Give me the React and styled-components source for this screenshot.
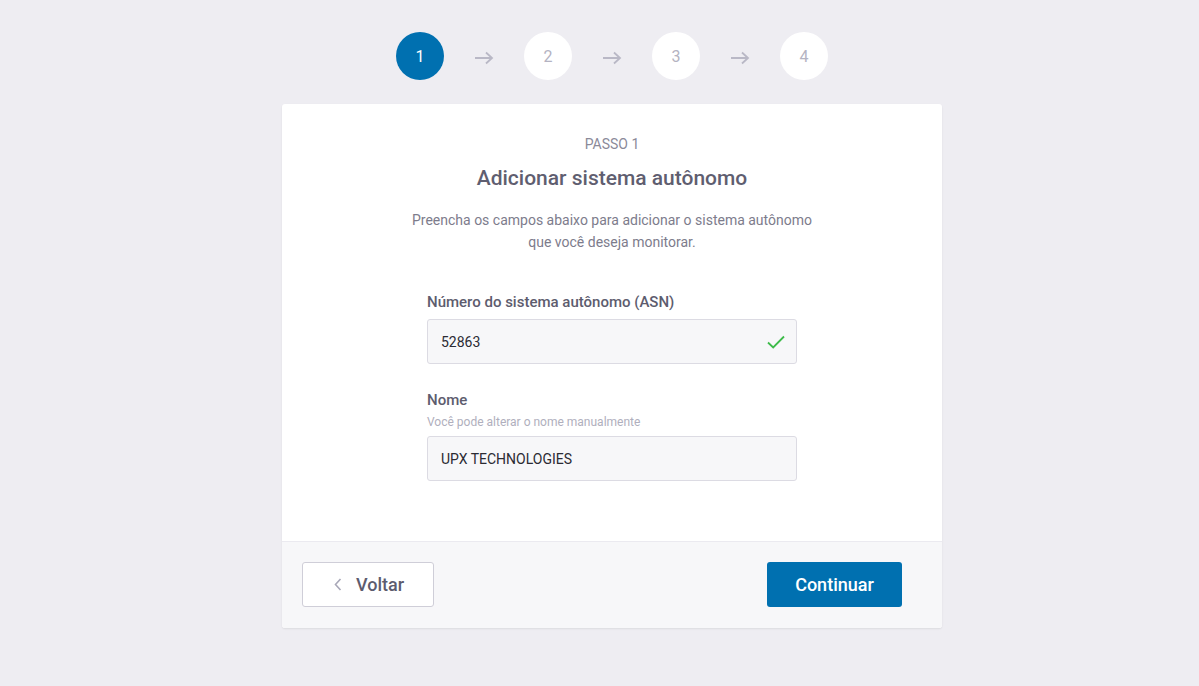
import React, { useState } from 'react';
import styled, { createGlobalStyle } from 'styled-components';

const GlobalStyle = createGlobalStyle`
  html, body {
    margin: 0;
    padding: 0;
    background: #eeedf2;
    font-family: Roboto, 'Liberation Sans', sans-serif;
  }
  * { box-sizing: border-box; }
`;

const Page = styled.div`
  min-height: 686px;
  display: flex;
  flex-direction: column;
  align-items: center;
  padding: 32px 0 0 25px;
`;

const Stepper = styled.div`
  display: flex;
  align-items: center;
  margin-bottom: 24px;
`;

const StepCircle = styled.div`
  width: 48px;
  height: 48px;
  border-radius: 50%;
  display: flex;
  align-items: center;
  justify-content: center;
  font-size: 16px;
  background: ${p => (p.active ? '#0070b0' : '#ffffff')};
  color: ${p => (p.active ? '#ffffff' : '#b4b3c2')};
`;

const StepArrow = styled.div`
  width: 80px;
  display: flex;
  justify-content: center;
  padding-top: 4px;
`;

const Card = styled.div`
  width: 660px;
  background: #ffffff;
  border-radius: 3px;
  box-shadow: 0 1px 2px rgba(0, 0, 0, 0.08);
  overflow: hidden;
`;

const CardBody = styled.div`
  display: flex;
  flex-direction: column;
  align-items: center;
  padding: 32px 0 60px;
  border-bottom: 1px solid #ebeaf0;
`;

const StepLabel = styled.div`
  font-size: 14px;
  color: #8b8a99;
  line-height: 16px;
`;

const Title = styled.h1`
  margin: 14px 0 0;
  font-size: 21px;
  font-weight: 500;
  color: #5f5e70;
  line-height: 24px;
`;

const Description = styled.p`
  margin: 19px 0 0;
  font-size: 14px;
  line-height: 22px;
  color: #7d7c8c;
  text-align: center;
`;

const Form = styled.div`
  width: 370px;
  margin-top: 40px;
  display: flex;
  flex-direction: column;
  gap: 27px;
`;

const Field = styled.div`
  display: flex;
  flex-direction: column;
`;

const Label = styled.label`
  font-size: 15px;
  font-weight: 500;
  color: #5d5c6e;
  line-height: 18px;
  margin-bottom: ${p => (p.withHint ? '6px' : '8px')};
`;

const Hint = styled.div`
  font-size: 12px;
  color: #b0afbd;
  line-height: 14px;
  margin-bottom: 7px;
`;

const InputWrap = styled.div`
  position: relative;
  height: 45px;
`;

const Input = styled.input`
  width: 100%;
  height: 100%;
  border: 1px solid #dcdbe3;
  border-radius: 3px;
  background: #f7f7f9;
  padding: 0 40px 0 13px;
  font-family: Roboto, 'Liberation Sans', sans-serif;
  font-size: 14px;
  color: #2b2b33;
  outline: none;
`;

const CheckIcon = styled.svg`
  position: absolute;
  right: 12px;
  top: 16px;
`;

const Footer = styled.div`
  background: #f7f7f9;
  padding: 20px 40px 21px 20px;
  display: flex;
  justify-content: space-between;
`;

const BackButton = styled.button`
  width: 132px;
  height: 45px;
  display: flex;
  align-items: center;
  gap: 14px;
  background: #ffffff;
  border: 1px solid #cfced8;
  border-radius: 3px;
  font-family: Roboto, 'Liberation Sans', sans-serif;
  font-size: 18px;
  font-weight: 500;
  color: #5d5c6e;
  padding: 0 0 0 31px;
`;

const PrimaryButton = styled.button`
  width: 135px;
  height: 45px;
  background: #0070b0;
  border: none;
  border-radius: 3px;
  font-family: Roboto, 'Liberation Sans', sans-serif;
  font-size: 18px;
  font-weight: 500;
  color: #ffffff;
`;

const Arrow = () => (
  <svg width="20" height="14" viewBox="0 0 20 14" fill="none">
    <path d="M1 7h17M12 1.5 18 7l-6 5.5" stroke="#b9b8c6" strokeWidth="1.8" />
  </svg>
);

export default function App() {
  const [asn, setAsn] = useState('52863');
  const [name, setName] = useState('UPX TECHNOLOGIES');
  const steps = [1, 2, 3, 4];

  return (
    <>
      <GlobalStyle />
      <Page>
        <Stepper>
          {steps.map((s, i) => (
            <React.Fragment key={s}>
              {i > 0 && (
                <StepArrow>
                  <Arrow />
                </StepArrow>
              )}
              <StepCircle active={s === 1}>{s}</StepCircle>
            </React.Fragment>
          ))}
        </Stepper>
        <Card>
          <CardBody>
            <StepLabel>PASSO 1</StepLabel>
            <Title>Adicionar sistema autônomo</Title>
            <Description>
              Preencha os campos abaixo para adicionar o sistema autônomo
              <br />
              que você deseja monitorar.
            </Description>
            <Form>
              <Field>
                <Label>Número do sistema autônomo (ASN)</Label>
                <InputWrap>
                  <Input value={asn} onChange={e => setAsn(e.target.value)} />
                  <CheckIcon width="18" height="14" viewBox="0 0 18 14" fill="none">
                    <path d="M1 7.5 6.2 12.5 17 1.5" stroke="#3dbb4a" strokeWidth="1.8" />
                  </CheckIcon>
                </InputWrap>
              </Field>
              <Field>
                <Label withHint>Nome</Label>
                <Hint>Você pode alterar o nome manualmente</Hint>
                <InputWrap>
                  <Input value={name} onChange={e => setName(e.target.value)} />
                </InputWrap>
              </Field>
            </Form>
          </CardBody>
          <Footer>
            <BackButton>
              <svg width="8" height="13" viewBox="0 0 8 13" fill="none">
                <path d="M6.5 1 1.5 6.5l5 5.5" stroke="#a9a8b8" strokeWidth="1.6" />
              </svg>
              Voltar
            </BackButton>
            <PrimaryButton>Continuar</PrimaryButton>
          </Footer>
        </Card>
      </Page>
    </>
  );
}
